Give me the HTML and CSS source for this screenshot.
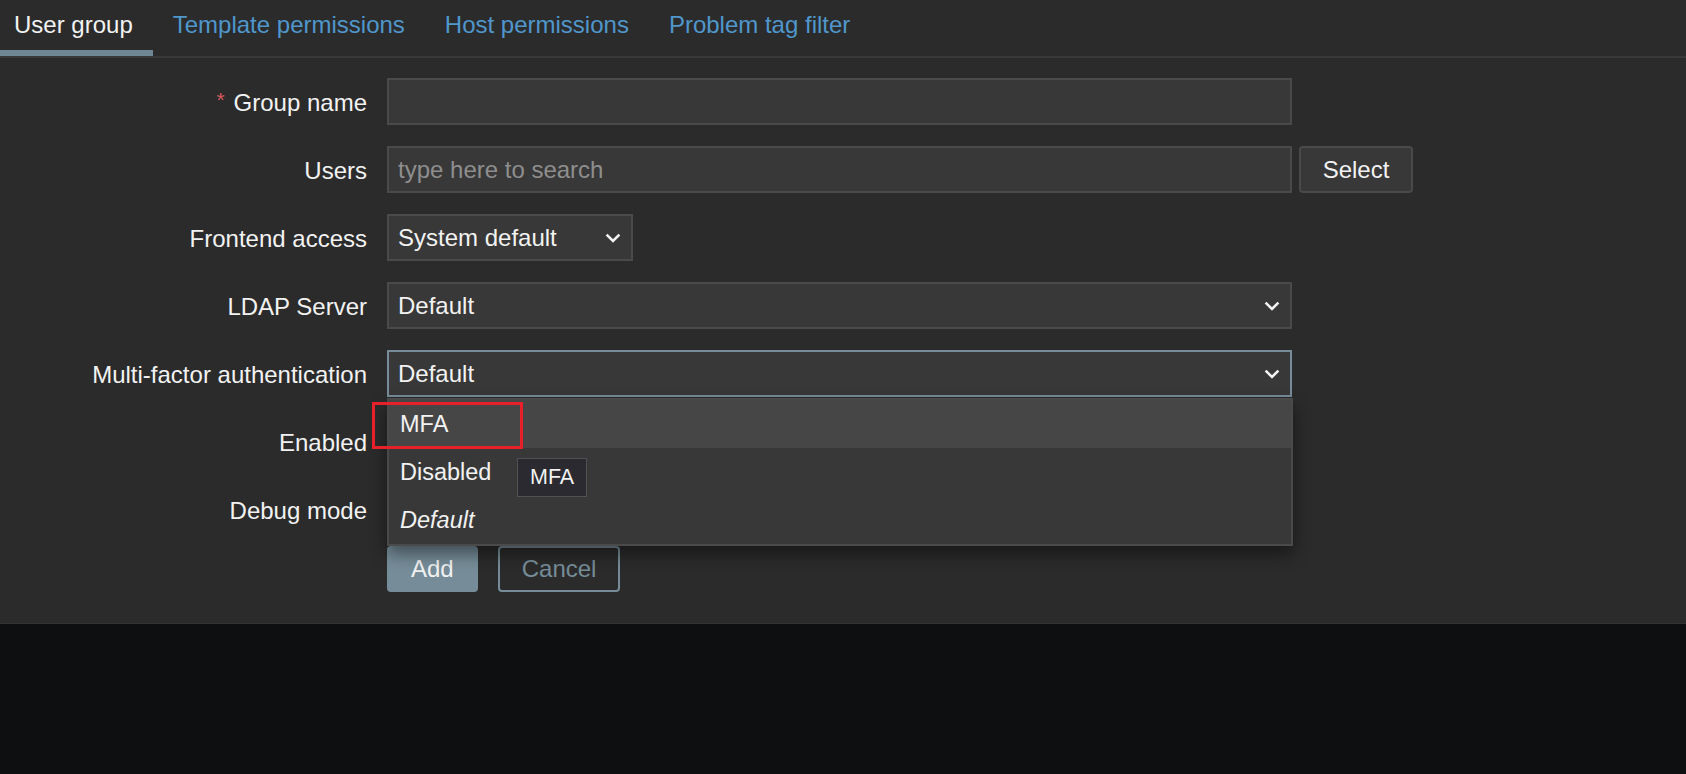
FILE: index.html
```html
<!DOCTYPE html>
<html lang="en">
<head>
<meta charset="utf-8">
<title>User group</title>
<link rel="stylesheet" href="styles.css">
</head>
<body>
<div class="panel">
  <nav class="tabs">
    <a class="tab tab-active">User group</a>
    <a class="tab">Template permissions</a>
    <a class="tab">Host permissions</a>
    <a class="tab">Problem tag filter</a>
  </nav>
  <form class="form">
    <div class="label"><span class="req">*</span>Group name</div>
    <div class="field"><div class="input input-wide"></div></div>

    <div class="label">Users</div>
    <div class="field">
      <div class="input input-wide placeholder">type here to search</div>
      <div class="btn-alt">Select</div>
    </div>

    <div class="label">Frontend access</div>
    <div class="field">
      <div class="select select-short"><span>System default</span><svg class="chev" viewBox="0 0 16 10" width="16" height="10"><polyline points="1.6,1.6 8,8 14.4,1.6" fill="none" stroke="#f2f2f2" stroke-width="2.6"/></svg></div>
    </div>

    <div class="label">LDAP Server</div>
    <div class="field">
      <div class="select input-wide"><span>Default</span><svg class="chev" viewBox="0 0 16 10" width="16" height="10"><polyline points="1.6,1.6 8,8 14.4,1.6" fill="none" stroke="#f2f2f2" stroke-width="2.6"/></svg></div>
    </div>

    <div class="label">Multi-factor authentication</div>
    <div class="field field-mfa">
      <div class="select input-wide select-focus"><span>Default</span><svg class="chev" viewBox="0 0 16 10" width="16" height="10"><polyline points="1.6,1.6 8,8 14.4,1.6" fill="none" stroke="#f2f2f2" stroke-width="2.6"/></svg></div>
      <ul class="dropdown">
        <li class="opt opt-hover">MFA</li>
        <li class="opt">Disabled</li>
        <li class="opt opt-italic">Default</li>
        <li class="tooltip">MFA</li>
        <li class="highlight"></li>
      </ul>
    </div>

    <div class="label">Enabled</div>
    <div class="field"><span class="checkbox"></span></div>

    <div class="label">Debug mode</div>
    <div class="field"><span class="checkbox"></span></div>

    <div class="label label-empty"></div>
    <div class="field buttons">
      <div class="btn-primary">Add</div>
      <div class="btn-secondary">Cancel</div>
    </div>
  </form>
</div>
</body>
</html>
```

FILE: styles.css
```css
* { box-sizing: border-box; }

html, body {
  margin: 0;
  padding: 0;
}

body {
  background: #0e0f11;
  font-family: "Liberation Sans", Arial, sans-serif;
  font-size: 24px;
  color: #f2f2f2;
  height: 774px;
  overflow: hidden;
}

.panel {
  background: #2b2b2b;
  border-bottom: 1px solid #333333;
  padding-bottom: 31px;
}

.tabs {
  display: flex;
  border-bottom: 2px solid #383838;
  height: 58px;
}

.tab {
  display: block;
  line-height: 49px;
  height: 56px;
  padding: 0 20px;
  color: #4f97cc;
  border-bottom: 6px solid transparent;
  white-space: nowrap;
}

.tab:first-child {
  padding-left: 14px;
  padding-right: 20px;
}

.tab-active {
  color: #f2f2f2;
  border-bottom-color: #6f8795;
}

.form {
  display: grid;
  grid-template-columns: 367px 1fr;
  column-gap: 20px;
  row-gap: 21px;
  padding-top: 20px;
  margin: 0;
}

.label {
  display: flex;
  align-items: center;
  justify-content: flex-end;
  height: 47px;
  padding-top: 2px;
  white-space: nowrap;
}

.req {
  color: #d4595a;
  margin-right: 9px;
  font-size: 21px;
  position: relative;
  top: -3px;
}

.field {
  display: flex;
  align-items: center;
  height: 47px;
}

.field-mfa {
  position: relative;
  z-index: 5;
}

.input, .select {
  height: 47px;
  background: #383838;
  border: 2px solid #4a4a4a;
  padding: 0 9px;
  display: flex;
  align-items: center;
  white-space: nowrap;
}

.input-wide { width: 905px; }

.placeholder { color: #8e8e8e; }

.select {
  justify-content: space-between;
  padding-right: 10px;
}

.select-short { width: 246px; }

.select-focus { border-color: #768d99; }

.chev { display: block; }

.btn-alt {
  margin-left: 7px;
  height: 47px;
  width: 114px;
  border: 2px solid #4a4a4a;
  border-radius: 4px;
  background: #383838;
  display: flex;
  align-items: center;
  justify-content: center;
}

.checkbox {
  display: block;
  width: 30px;
  height: 30px;
  border: 2px solid #4f4f4f;
  background: #383838;
}

.buttons {
  margin-top: -8px;
  height: 46px;
  gap: 20px;
}

.label-empty { height: 46px; margin-top: -8px; }

.btn-primary, .btn-secondary {
  height: 46px;
  padding: 0 22px;
  border: 2px solid #768d99;
  border-radius: 4px;
  display: flex;
  align-items: center;
  justify-content: center;
}

.btn-primary {
  background: #768d99;
  color: #f2f2f2;
}

.btn-secondary {
  background: transparent;
  color: #768d99;
}

.dropdown {
  position: absolute;
  left: 0;
  top: calc(100% + 1px);
  width: 906px;
  margin: 0;
  padding: 0;
  list-style: none;
  background: #383838;
  border: 2px solid #4a4a4a;
  box-shadow: 0 8px 16px rgba(0, 0, 0, 0.45);
  font-size: 23.5px;
}

.opt {
  height: 48px;
  line-height: 48px;
  padding-left: 11px;
}

.opt-hover { background: #464646; }

.opt-italic { font-style: italic; }

.tooltip {
  position: absolute;
  left: 128px;
  top: 58px;
  height: 39px;
  line-height: 37px;
  padding: 0 12px;
  font-size: 21.5px;
  background: #2a2a30;
  border: 1px solid #515151;
  color: #f2f2f2;
}

.highlight {
  position: absolute;
  left: -17px;
  top: 2px;
  width: 151px;
  height: 47px;
  border: 3px solid #e8202a;
}
```
